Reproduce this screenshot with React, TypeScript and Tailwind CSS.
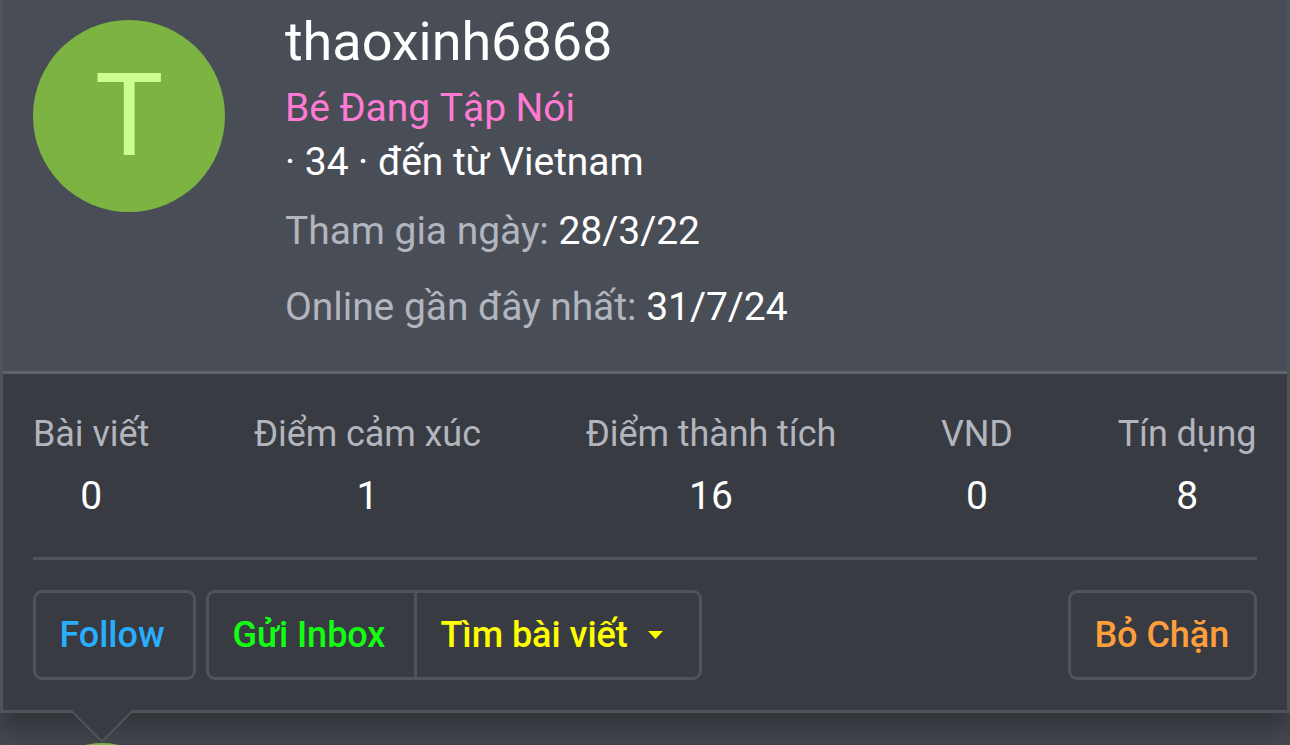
import React from "react";

const stats = [
  { label: "Bài viết", value: "0" },
  { label: "Điểm cảm xúc", value: "1" },
  { label: "Điểm thành tích", value: "16" },
  { label: "VND", value: "0" },
  { label: "Tín dụng", value: "8" },
];

const buttonBase =
  "flex h-[90px] items-center border-[3px] border-[#505359] pl-[23.4px] text-[36px] leading-[50px] font-medium tracking-[-0.03px] whitespace-nowrap";

function Header() {
  return (
    <header className="flex h-[374px] border-b-[3px] border-[#5f636b] bg-[#494d56] pt-[15px] pl-[30px]">
      <div className="mt-[5px] flex size-48 shrink-0 items-center justify-center rounded-full bg-[#7cb342] text-[115.2px] leading-[192px] text-[#ccff90]">
        <span className="-mt-[1px]">T</span>
      </div>
      <div className="ml-[60px] text-[39px] leading-[54.6px] tracking-[-0.05px] whitespace-nowrap text-white">
        <h1 className="text-[54px] leading-[54px] font-normal">thaoxinh6868</h1>
        <div className="mt-[12px] h-[54px] text-[#ff7bd3] [font-kerning:none]">Bé Đang Tập Nói</div>
        <div>· 34 · đến từ Vietnam</div>
        <dl className="mt-[14px] flex gap-[9.8px]">
          <dt className="text-[#b2b5be]">Tham gia ngày:</dt>
          <dd>28/3/22</dd>
        </dl>
        <dl className="mt-[22px] flex gap-[9.8px]">
          <dt className="text-[#b2b5be]">Online gần đây nhất:</dt>
          <dd>31/7/24</dd>
        </dl>
      </div>
    </header>
  );
}

function Stats() {
  return (
    <div className="-mr-px -ml-px flex justify-between pt-[35px] pr-[1.5px] pl-px">
      {stats.map((s) => (
        <dl key={s.label} className="text-center tracking-[-0.08px] whitespace-nowrap">
          <dt className="text-[36px] leading-[50px] text-[#b2b5be]">{s.label}</dt>
          <dd className="mt-[10px] text-[39px] leading-[54px] text-white">{s.value}</dd>
        </dl>
      ))}
    </div>
  );
}

function Actions() {
  return (
    <div className="mt-[30px] flex">
      <button className={buttonBase + " w-[163px] rounded-[9px] text-[#29aeff]"}>Follow</button>
      <button className={buttonBase + " ml-[10px] w-[211px] rounded-l-[9px] text-[#12ff12]"}>Gửi Inbox</button>
      <button className={buttonBase + " -ml-[3px] w-[288px] rounded-r-[9px] text-[#ffff00]"}>
        Tìm bài viết
        <svg viewBox="0 0 15 8" className="-mt-px ml-5 h-2 w-[15px]" fill="currentColor">
          <path d="M0 0h15L7.5 8z" />
        </svg>
      </button>
      <button className={buttonBase + " ml-auto w-[189px] rounded-[9px] text-[#ff9f3b]"}>Bỏ Chặn</button>
    </div>
  );
}

export default function App() {
  return (
    <div className="relative h-[745px] w-[1290px] overflow-hidden bg-[#454950] font-['Roboto',sans-serif]">
      <section className="h-[713px] border-x-[3px] border-b-[3px] border-[#505359] bg-[#383b42] shadow-[0_15px_30px_0_rgba(0,0,0,0.35)]">
        <Header />
        <div className="px-[30px]">
          <div className="h-[186px] border-b-[3px] border-[#505359]">
            <Stats />
          </div>
          <Actions />
        </div>
      </section>
      <div className="absolute top-[743px] left-[30px] size-36 rounded-full bg-[#7cb342]" />
      <svg className="absolute top-[710px] left-[69px]" width="66" height="33" viewBox="0 0 66 33">
        <path d="M1 0H65L33 32Z" fill="#383b42" />
        <path d="M1.5 0L33 31.5L64.5 0" fill="none" stroke="#505359" strokeWidth="2" />
      </svg>
    </div>
  );
}
